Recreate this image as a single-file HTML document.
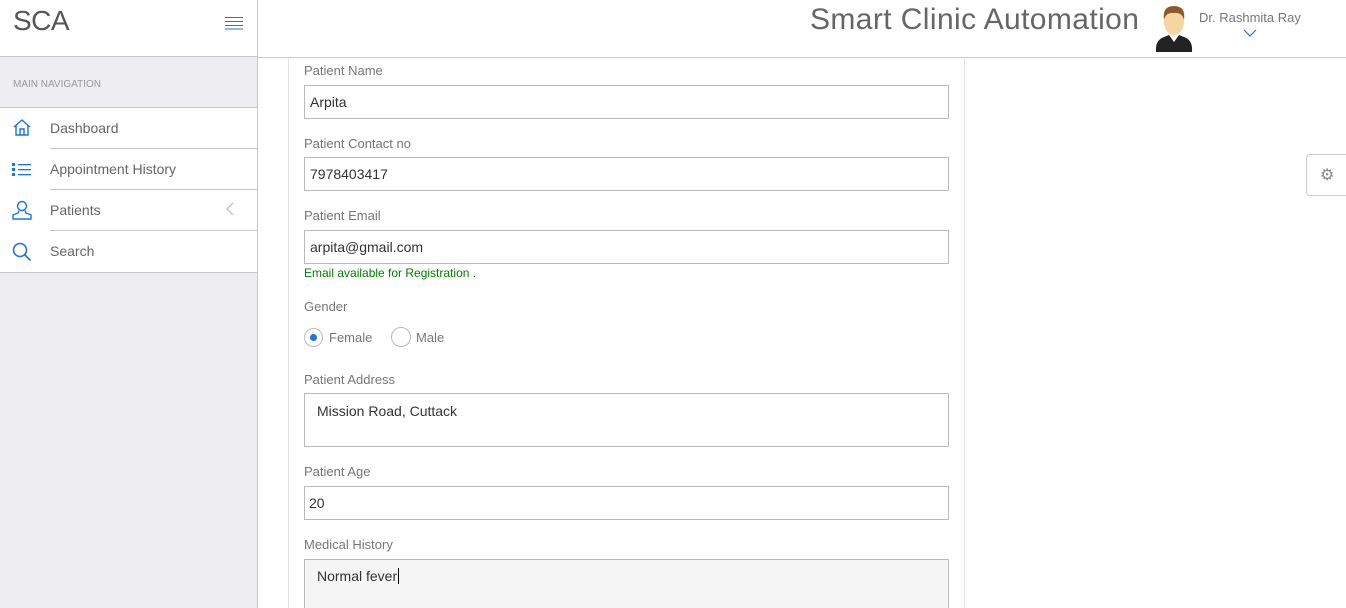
<!DOCTYPE html>
<html><head><style>
*{box-sizing:border-box;margin:0;padding:0}
html,body{width:1346px;height:608px;overflow:hidden}
body{font-family:"Liberation Sans",sans-serif;background:#fff;position:relative;font-size:14px;color:#555}
.abs{position:absolute}
.sb{left:0;top:0;width:258px;height:608px;background:#eeeef2;border-right:1px solid #c8c8cc}
.sbh{left:0;top:0;width:257px;height:57px;background:#fff;border-bottom:1px solid #c8c8cc}
.hdr{left:258px;top:0;width:1088px;height:58px;border-bottom:1px solid #c8c8cc;background:#fff}
.menu{left:0;top:107px;width:257px;height:166px;background:#fff;border-top:1px solid #c8c8cc;border-bottom:1px solid #c8c8cc}
.item{position:absolute;left:0;width:257px;height:41px}
.item span{position:absolute;left:50px;top:12px;font-size:14px;color:#666}
.sep{position:absolute;left:50px;right:0;height:1px;background:#c8c8cc}
.lbl{position:absolute;left:304px;font-size:13px;color:#777}
.inp{position:absolute;left:304px;width:645px;height:34px;border:1px solid #bbb;font-size:14px;color:#333;padding:8px 5px}
</style></head><body>
<div class="abs sb"></div>
<div class="abs sbh"><div class="abs" style="left:13px;top:5px;font-size:28px;color:#555;letter-spacing:-0.5px">SCA</div>
<svg class="abs" style="left:225px;top:16px" width="18" height="14"><g stroke="#1a73e8" stroke-width="1"><line x1="0" y1="1.5" x2="18" y2="1.5"/><line x1="0" y1="5.5" x2="18" y2="5.5"/><line x1="0" y1="9.5" x2="18" y2="9.5"/><line x1="0" y1="13" x2="18" y2="13"/></g></svg></div>
<div class="abs" style="left:13px;top:79px;font-size:10px;color:#999">MAIN NAVIGATION</div>
<div class="abs menu">
<div class="item" style="top:0"><svg class="abs" style="left:13px;top:11px" width="18" height="17" fill="none" stroke="#1a73e8" stroke-width="1.4"><path d="M1 8L9 1L17 8M3 6.5V16H15V6.5M7 16V10H11V16"/></svg><span>Dashboard</span></div>
<div class="sep" style="top:40px"></div>
<div class="item" style="top:41px"><svg class="abs" style="left:12px;top:14px" width="20" height="13" fill="#1a73e8"><rect x="0" y="0" width="3" height="3"/><rect x="0" y="5" width="3" height="3"/><rect x="0" y="10" width="3" height="3"/><rect x="6" y="1" width="13" height="1.3"/><rect x="6" y="6" width="13" height="1.3"/><rect x="6" y="11" width="13" height="1.3"/></svg><span>Appointment History</span></div>
<div class="sep" style="top:81px"></div>
<div class="item" style="top:82px"><svg class="abs" style="left:12px;top:10px" width="20" height="20" fill="none" stroke="#1a73e8" stroke-width="1.4"><circle cx="10" cy="6" r="4.5"/><path d="M7 10.5L6 13L1 15V19H19V15L14 13L13 10.5"/></svg><span>Patients</span><svg class="abs" style="left:226px;top:12px" width="8" height="14" fill="none" stroke="#bbb" stroke-width="1.2"><path d="M7 1L1 7L7 13"/></svg></div>
<div class="sep" style="top:122px"></div>
<div class="item" style="top:123px"><svg class="abs" style="left:12px;top:11px" width="20" height="20" fill="none" stroke="#1a73e8" stroke-width="1.6"><circle cx="8" cy="8" r="6.5"/><path d="M12.5 12.5L18.5 18.5"/></svg><span>Search</span></div>
</div>
<div class="abs hdr"></div>
<div class="abs" style="left:810px;top:3px;font-size:30px;color:#666;letter-spacing:0.4px">Smart Clinic Automation</div>
<svg class="abs" style="left:1154px;top:4px" width="40" height="48"><path d="M2 48Q1 36 10 33L15 31L20 38L25 31L30 33Q39 36 38 48Z" fill="#222"/><ellipse cx="20" cy="18" rx="10" ry="13" fill="#f5d6a0"/><path d="M10 16Q8 2 20 2Q32 2 30 16Q28 8 20 9Q12 8 10 16Z" fill="#8b5a2b"/></svg>
<div class="abs" style="left:1199px;top:10px;font-size:13px;color:#777">Dr. Rashmita Ray</div>
<svg class="abs" style="left:1243px;top:29px" width="14" height="8" fill="none" stroke="#1a73e8" stroke-width="1.2"><path d="M1 1L7 7L13 1"/></svg>
<div class="abs" style="left:288px;top:58px;width:677px;height:550px;border-left:1px solid #e5e5e5;border-right:1px solid #e5e5e5"></div>
<div class="abs" style="left:1306px;top:154px;width:44px;height:42px;border:1px solid #ccc;border-radius:4px;background:#fff"><div class="abs" style="left:13px;top:10px;font-size:16px;color:#888">⚙</div></div>
<div class="lbl" style="top:63px">Patient Name</div>
<div class="inp" style="top:85px">Arpita</div>
<div class="lbl" style="top:136px">Patient Contact no</div>
<div class="inp" style="top:157px">7978403417</div>
<div class="lbl" style="top:208px">Patient Email</div>
<div class="inp" style="top:230px">arpita@gmail.com</div>
<div class="abs" style="left:304px;top:266px;font-size:12px;color:#008000">Email available for Registration .</div>
<div class="lbl" style="top:299px">Gender</div>
<div class="abs" style="left:304px;top:328px;width:19px;height:19px;border:1px solid #bbb;border-radius:50%"><div class="abs" style="left:5px;top:5px;width:7px;height:7px;border-radius:50%;background:#1a73e8"></div></div>
<div class="abs" style="left:329px;top:330px;font-size:13px;color:#777">Female</div>
<div class="abs" style="left:391px;top:327px;width:20px;height:20px;border:1px solid #bbb;border-radius:50%"></div>
<div class="abs" style="left:416px;top:330px;font-size:13px;color:#777">Male</div>
<div class="lbl" style="top:372px">Patient Address</div>
<div class="inp" style="top:393px;height:54px;padding:9px 12px">Mission Road, Cuttack</div>
<div class="lbl" style="top:464px">Patient Age</div>
<div class="inp" style="top:486px;padding:8px 4px">20</div>
<div class="lbl" style="top:537px">Medical History</div>
<div class="inp" style="top:559px;height:60px;background:#f5f5f5;padding:8px 12px">Normal fever<span style="border-left:1px solid #000;margin-left:1px"></span></div>
</body></html>
